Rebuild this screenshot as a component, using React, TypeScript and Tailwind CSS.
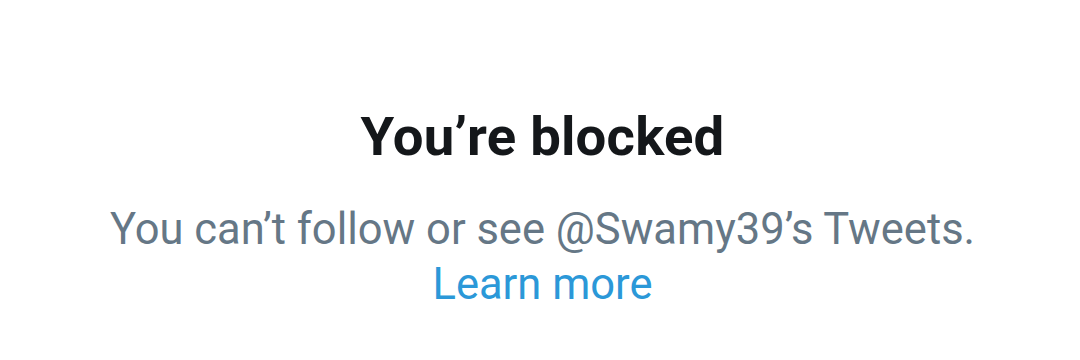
export default function App() {
  return (
    <div className="w-[1080px] h-[360px] bg-white flex flex-col items-center pt-[104px] pl-[5px] font-['Roboto',sans-serif]">
      <h1 className="text-[54.5px] leading-[64px] font-bold text-[#14171a] tracking-[0.2px]">You’re blocked</h1>
      <p className="mt-[34px] text-[43.5px] leading-[55px] text-[#657786] text-center">
        You can’t follow or see @Swamy39’s Tweets.
        <br />
        <span className="text-[#2b98d8]">Learn more</span>
      </p>
    </div>
  );
}
